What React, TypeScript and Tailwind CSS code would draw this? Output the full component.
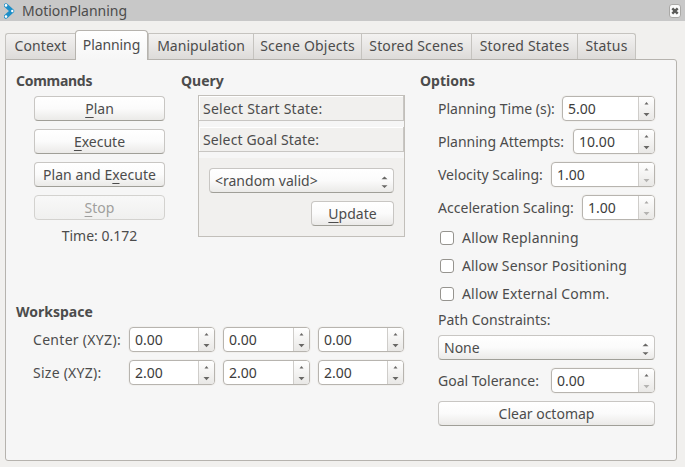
import type { ReactNode } from "react";

function Title({ className = "", children }: { className?: string; children: ReactNode }) {
  return <h2 className={`h-5 text-[14px] leading-5 font-bold whitespace-nowrap ${className}`}>{children}</h2>;
}

function Key({ children }: { children: string }) {
  return <span className="underline decoration-1 underline-offset-[3px]">{children}</span>;
}

function Button({ className = "", disabled = false, children }: { className?: string; disabled?: boolean; children: ReactNode }) {
  const look = disabled
    ? "border-[#d3d2cf] bg-linear-to-b from-[#f8f8f8] to-[#f0f0ef] text-[#a09f9d]"
    : "border-[#c8c6c3] border-b-[#a09f98] bg-linear-to-b from-white via-[#fbfbfb] to-[#ebeae8] shadow-[inset_0_1px_0_#fff]";
  return (
    <button disabled={disabled} className={`flex h-[25px] shrink-0 items-center justify-center rounded-[4px] border pt-px whitespace-nowrap ${look} ${className}`}>
      <span>{children}</span>
    </button>
  );
}

function Select({ className = "", children }: { className?: string; children: ReactNode }) {
  return (
    <button className={`flex h-[25px] shrink-0 items-center justify-between rounded-[4px] border border-[#c8c6c3] border-b-[#a09f98] bg-linear-to-b from-white via-[#fbfbfb] to-[#ebeae8] pt-px pr-[5px] pl-[5px] whitespace-nowrap ${className}`}>
      <span>{children}</span>
      <svg width="7" height="14" viewBox="0 0 7 14" fill="#686765" className="mt-px">
        <path d="M3.5 1.500 6.5 4.300h-6zM3.5 13 .5 10.200h6z" />
      </svg>
    </button>
  );
}

function Spin({ className, value, up = true, down = true }: { className: string; value: string; up?: boolean; down?: boolean }) {
  return (
    <div className={`flex h-[25px] shrink-0 overflow-hidden rounded-[4px] border border-[#b7b4af] bg-white shadow-[0_0_0_1px_#f1f0ee] ${className}`}>
      <span className="flex-1 pl-[5px] leading-[23px] tracking-[0.03px] text-[#3c3c3c]">{value}</span>
      <span className="flex w-4 justify-center border-l border-[#cfcdca] bg-linear-to-b from-white to-[#e9e8e6]">
        <svg width="7" height="23" viewBox="0 0 7 23">
          <path d="M3.5 5 5.5 7.4h-4z" fill={up ? "#686765" : "#a9a8a6"} />
          <path d="M.5 16h6l-3 3.2z" fill={down ? "#686765" : "#b4b3b1"} />
        </svg>
      </span>
    </div>
  );
}

function Check({ className = "", label }: { className?: string; label: string }) {
  return (
    <label className="flex h-[28px] items-center gap-2 pl-0.5 whitespace-nowrap">
      <span className="size-[14px] rounded-[3px] border border-[#96948f] bg-white" />
      <span className={className}>{label}</span>
    </label>
  );
}

const tabs = [
  { name: "Context", look: "w-[70px] tracking-[0.1px] rounded-tl-[3px]" },
  { name: "Planning", look: "w-[73px] tracking-[-0.1px]" },
  { name: "Manipulation", look: "w-[105px] tracking-[0.03px]" },
  { name: "Scene Objects", look: "w-[108px] tracking-[0.2px]" },
  { name: "Stored Scenes", look: "w-[110px] tracking-[0.15px]" },
  { name: "Stored States", look: "w-[106px] tracking-[0.2px]" },
  { name: "Status", look: "w-[59px] tracking-[0.2px] rounded-tr-[3px] border-r" },
];

export default function App() {
  return (
    <div className="flex h-[467px] w-[685px] flex-col bg-[#f1f0ee] font-['Noto_Sans',sans-serif] text-[14px] leading-5 text-[#4c4c4c]">
      <header className="flex h-[21px] shrink-0 items-center bg-[#c8c8c8] pr-1 pl-1">
        <svg width="11" height="16" viewBox="0 0 11 16">
          <path d="M2 2.5 8 8 2 13.5" fill="none" stroke="#1e8fc8" strokeWidth="4.4" strokeLinecap="round" strokeLinejoin="round" />
          <circle cx="2" cy="2.4" r="1.3" fill="#fff" />
          <circle cx="8.3" cy="8" r="1.2" fill="#fff" />
          <circle cx="2" cy="13.6" r="1.3" fill="#fff" />
        </svg>
        <span className="ml-[7px] flex-1">MotionPlanning</span>
        <svg width="12" height="14" viewBox="0 0 12 14">
          <rect x=".5" y=".5" width="11" height="13" rx="2.5" fill="#fafafa" stroke="#aaa9a7" />
          <path d="m3.3 4.3 5.4 5.4m0-5.4L3.3 9.700" stroke="#5a5a58" strokeWidth="2.4" />
        </svg>
      </header>

      <nav className="flex h-[38px] shrink-0 items-end pl-[5px]">
        {tabs.map((t) =>
          t.name === "Planning" ? (
            <div key={t.name} className={`z-10 -mb-px flex h-[30px] items-center justify-center rounded-t-[4px] border border-b-0 border-[#b6b3ae] bg-linear-to-b from-white to-[#f6f6f6] pb-px whitespace-nowrap ${t.look}`}>
              {t.name}
            </div>
          ) : (
            <div key={t.name} className={`flex h-[26px] items-center justify-center border-t border-l border-[#c5c3bf] bg-linear-to-b from-[#f3f2f1] to-[#dddbd9] pb-px whitespace-nowrap ${t.look}`}>
              {t.name}
            </div>
          ),
        )}
      </nav>

      <main className="ml-[5px] flex h-[402px] w-[672px] shrink-0 rounded-[3px] rounded-tl-none border border-[#b6b3ae] bg-[#f6f6f6] pt-[11px] pl-[10px]">
        <div className="flex w-[404px] flex-col">
          <div className="flex h-[231px]">
            <section className="w-[165px]">
              <Title className="tracking-[-0.28px]">Commands</Title>
              <div className="mt-[5px] ml-[18px] flex w-[131px] flex-col gap-2">
                <Button><Key>P</Key>lan</Button>
                <Button><Key>E</Key>xecute</Button>
                <Button className="tracking-[0.05px]">Plan and E<Key>x</Key>ecute</Button>
                <Button disabled><Key>S</Key>top</Button>
                <p className="-mt-0.5 text-center">Time: 0.172</p>
              </div>
            </section>
            <section>
              <Title>Query</Title>
              <div className="mt-1 ml-[17px] flex h-[142px] w-[207px] flex-col border border-[#c2bfba] bg-[#f1f0ee]">
                <div className="h-[25px] shrink-0 border-r border-b border-[#c8c6c3] pl-1 leading-[25px] tracking-[0.24px] shadow-[inset_1px_1px_0_#fff]">Select Start State:</div>
                <div className="h-[6px] shrink-0 bg-[#f6f6f6]" />
                <div className="h-[25px] shrink-0 border-r border-b border-[#c8c6c3] pl-1 leading-[25px] tracking-[0.14px] shadow-[inset_1px_1px_0_#fff]">Select Goal State:</div>
                <div className="h-[6px] shrink-0 bg-[#f6f6f6]" />
                <div className="flex flex-1 flex-col items-end gap-2 pt-[10px] pr-[10px]">
                  <Select className="w-[185px]">&lt;random valid&gt;</Select>
                  <Button className="w-[83px]"><Key>U</Key>pdate</Button>
                </div>
              </div>
            </section>
          </div>
          <section>
            <Title>Workspace</Title>
            <div className="mt-[5px] ml-[17px] flex flex-col gap-2">
              <div className="flex items-center">
                <span className="w-24 tracking-[0.3px]">Center (XYZ):</span>
                <Spin className="w-[86px]" value="0.00" />
                <Spin className="ml-2 w-[87px]" value="0.00" />
                <Spin className="ml-2 w-[86px]" value="0.00" />
              </div>
              <div className="flex items-center">
                <span className="w-24 tracking-[0.25px]">Size (XYZ):</span>
                <Spin className="w-[86px]" value="2.00" />
                <Spin className="ml-2 w-[87px]" value="2.00" />
                <Spin className="ml-2 w-[86px]" value="2.00" />
              </div>
            </div>
          </section>
        </div>

        <section className="w-[235px]">
          <Title>Options</Title>
          <div className="mt-[5px] ml-[18px] flex w-[217px] flex-col gap-2">
            <div className="flex items-center justify-between whitespace-nowrap">
              <span>Planning Time (s):</span>
              <Spin className="w-[93px]" value="5.00" />
            </div>
            <div className="flex items-center justify-between whitespace-nowrap">
              <span>Planning Attempts:</span>
              <Spin className="w-[82px]" value="10.00" />
            </div>
            <div className="flex items-center justify-between whitespace-nowrap">
              <span>Velocity Scaling:</span>
              <Spin className="w-[104px]" value="1.00" up={false} down={false} />
            </div>
            <div className="flex items-center justify-between whitespace-nowrap">
              <span className="tracking-[0.04px]">Acceleration Scaling:</span>
              <Spin className="w-[73px]" value="1.00" up={false} down={false} />
            </div>
            <div className="-mt-[4px] flex flex-col">
              <Check className="tracking-[0.18px]" label="Allow Replanning" />
              <Check className="tracking-[0.14px]" label="Allow Sensor Positioning" />
              <Check className="tracking-[0.17px]" label="Allow External Comm." />
            </div>
            <div className="-mt-[6px] h-5">Path Constraints:</div>
            <Select className="-mt-[3px] w-full">None</Select>
            <div className="flex items-center justify-between whitespace-nowrap">
              <span>Goal Tolerance:</span>
              <Spin className="w-[104px]" value="0.00" down={false} />
            </div>
            <Button>Clear octomap</Button>
          </div>
        </section>
      </main>
    </div>
  );
}
